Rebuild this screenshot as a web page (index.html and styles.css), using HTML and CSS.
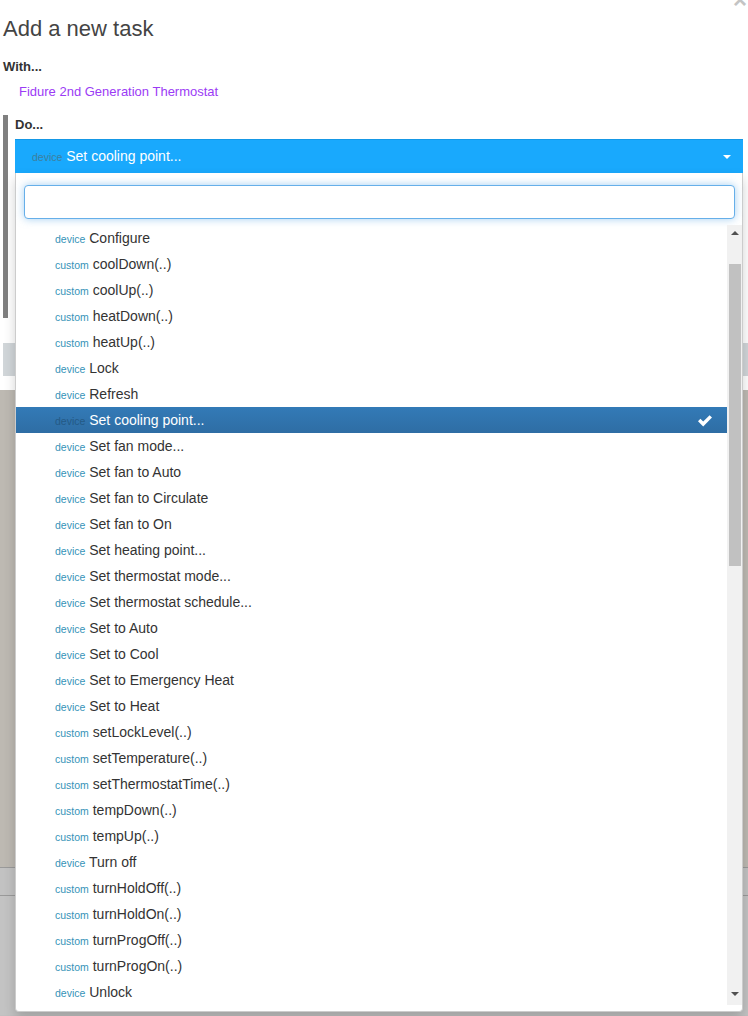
FILE: index.html
```html
<!DOCTYPE html>
<html lang="en">
<head>
  <meta charset="utf-8" />
  <title>Add a new task</title>
  <meta name="viewport" content="width=device-width, initial-scale=1" />
  <link rel="stylesheet" href="styles.css">
</head>
<body>
  <div class="modal">
    <span class="close">&times;</span>
    <h2 class="title">Add a new task</h2>

    <div class="with">
      <div class="label">With...</div>
      <a class="device-link" href="#">Fidure 2nd Generation Thermostat</a>
    </div>

    <!-- step: action picker -->
    <div class="step">
      <div class="label">Do...</div>
      <div class="picker">
        <div class="picked">
          <span class="kind">device</span> Set cooling point...
          <span class="caret"></span>
        </div>

        <div class="drop">
          <input class="search" type="text" />
          <div class="list-wrap">
            <ul class="options">
              <li><span class="kind">device</span> Configure</li>
              <li><span class="kind">custom</span> coolDown(..)</li>
              <li><span class="kind">custom</span> coolUp(..)</li>
              <li><span class="kind">custom</span> heatDown(..)</li>
              <li><span class="kind">custom</span> heatUp(..)</li>
              <li><span class="kind">device</span> Lock</li>
              <li><span class="kind">device</span> Refresh</li>
              <li class="active"><span class="kind">device</span> Set cooling point...
                <svg class="tick" viewBox="0 0 16 13" width="16" height="13"><path d="M1 7.2 L3.4 4.8 L6.2 7.6 L12.6 1.2 L15 3.6 L6.2 12.4 Z" fill="#fff"/></svg>
              </li>
              <li><span class="kind">device</span> Set fan mode...</li>
              <li><span class="kind">device</span> Set fan to Auto</li>
              <li><span class="kind">device</span> Set fan to Circulate</li>
              <li><span class="kind">device</span> Set fan to On</li>
              <li><span class="kind">device</span> Set heating point...</li>
              <li><span class="kind">device</span> Set thermostat mode...</li>
              <li><span class="kind">device</span> Set thermostat schedule...</li>
              <li><span class="kind">device</span> Set to Auto</li>
              <li><span class="kind">device</span> Set to Cool</li>
              <li><span class="kind">device</span> Set to Emergency Heat</li>
              <li><span class="kind">device</span> Set to Heat</li>
              <li><span class="kind">custom</span> setLockLevel(..)</li>
              <li><span class="kind">custom</span> setTemperature(..)</li>
              <li><span class="kind">custom</span> setThermostatTime(..)</li>
              <li><span class="kind">custom</span> tempDown(..)</li>
              <li><span class="kind">custom</span> tempUp(..)</li>
              <li><span class="kind">device</span> Turn off</li>
              <li><span class="kind">custom</span> turnHoldOff(..)</li>
              <li><span class="kind">custom</span> turnHoldOn(..)</li>
              <li><span class="kind">custom</span> turnProgOff(..)</li>
              <li><span class="kind">custom</span> turnProgOn(..)</li>
              <li><span class="kind">device</span> Unlock</li>
            </ul>
            <div class="scroll">
              <span class="arrow up"></span>
              <span class="thumb"></span>
              <span class="arrow down"></span>
            </div>
          </div>
        </div>
      </div>
      <div class="params"><div class="param-edge"></div></div>
    </div>

    <div class="actions"></div>
  </div>

  <!-- page behind the dialog -->
  <div class="backdrop">
    <div class="band band-a"></div>
    <div class="band band-b"></div>
    <div class="band band-c"></div>
  </div>
</body>
</html>
```

FILE: styles.css
```css
:root{
  --text:#333;
  --kind:#3593b8;
  --blue:#19a9fd;
  --active:#337ab7;
}

*{box-sizing:border-box;margin:0;padding:0}
body{
  font-family:'Liberation Sans',Arial,Helvetica,sans-serif;
  color:var(--text);background:#fff;
  width:748px;overflow:hidden;
}

/* —— Dialog —— */
.modal{position:relative;height:390px;background:#fff}
.close{
  position:absolute;top:-12px;right:1px;
  font-size:24px;line-height:24px;color:#c4c4c4;font-weight:700;
}
.title{
  font-size:22px;font-weight:400;color:#444;line-height:26px;
  padding:16px 0 0 3px;
}
.label{font-size:13px;font-weight:700;line-height:18px;color:#333}
.with{padding:16px 0 0 3px}
.device-link{
  display:block;margin:7px 0 0 16px;
  font-size:13px;line-height:18px;color:#9b3bf5;text-decoration:none;
}

/* —— Step with picker —— */
.step{
  margin:14px 0 0 3px;padding:0 5px 0 7px;
  border-left:5px solid #808080;
}
.step .label{padding-top:1px}
.picker{position:relative;margin-top:5px}
.picked{
  position:relative;height:34px;line-height:33px;
  background:var(--blue);border-top:1px solid #1598e6;
  padding-left:17px;color:#fff;font-size:14px;
}
.picked .kind{color:#3e7f9c}
.caret{
  position:absolute;right:12px;top:15px;
  border-top:4px solid #fff;border-left:4px solid transparent;border-right:4px solid transparent;
}
.kind{font-size:10.5px;color:var(--kind)}

.drop{
  position:absolute;top:100%;left:0;right:0;z-index:10;
  background:#fff;border:1px solid #ccc;border-top:none;border-radius:0 0 4px 4px;
  box-shadow:0 6px 12px rgba(0,0,0,.18);
}
.search{
  display:block;width:calc(100% - 15px);height:34px;margin:12px 7px 6px 8px;
  border:1px solid #66afe9;border-radius:4px;outline:none;
  box-shadow:0 0 8px rgba(102,175,233,.6);
}
.list-wrap{display:flex;padding-bottom:6px}
.options{flex:1;list-style:none}
.options li{
  position:relative;height:26px;line-height:26px;padding-left:39px;
  font-size:14px;color:var(--text);white-space:nowrap;
}
.options li.active{background:linear-gradient(var(--active),#2e6da4);color:#fff}
.options li.active .kind{color:#245a86}
.tick{position:absolute;right:14px;top:7px}

.scroll{
  width:15px;background:#f1f1f1;
  display:flex;flex-direction:column;align-items:center;
}
.arrow{display:block;margin:6px 0;border-left:4px solid transparent;border-right:4px solid transparent}
.arrow.up{border-bottom:4px solid #505050}
.arrow.down{border-top:4px solid #505050;margin-top:auto;margin-bottom:9px}
.thumb{display:block;width:12px;height:302px;margin-top:23px;background:#c1c1c1}

.params{height:145px;display:flex;flex-direction:column;justify-content:flex-end}
.param-edge{height:38px;border-left:1px solid #d07a2e}

.actions{margin:25px 0 0 3px;height:33px;background:#d1d6d9}

/* —— Page behind —— */
.backdrop{height:626px;background:#c0c0c0}
.band-a{height:478px;background:#bdb9b2;border-bottom:1px solid #9a9a9a}
.band-b{height:28px;background:#c2c2c2;border-bottom:1px solid #9a9a9a}
.band-c{height:119px;background:#c3c3c3}
```
